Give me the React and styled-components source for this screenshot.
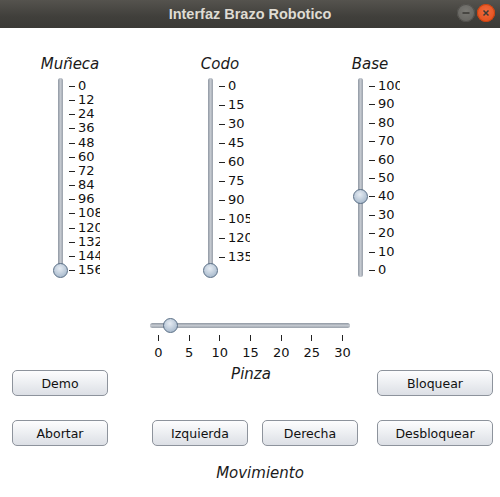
import styled, { createGlobalStyle } from 'styled-components';

const GlobalStyle = createGlobalStyle`
  html, body {
    margin: 0;
    padding: 0;
    background: #ffffff;
  }
  body {
    width: 500px;
    height: 497px;
    overflow: hidden;
    font-family: "DejaVu Sans", sans-serif;
  }
`;

const Window = styled.div`
  width: 500px;
  height: 497px;
  display: flex;
  flex-direction: column;
  background: #ffffff;
`;

const TitleBar = styled.div`
  height: 28px;
  flex: none;
  position: relative;
  display: flex;
  align-items: center;
  justify-content: center;
  background: linear-gradient(#55534e, #403f3b 60%, #3b3a36);
`;

const Title = styled.span`
  font-family: "Liberation Sans", Arial, sans-serif;
  font-weight: 700;
  font-size: 14.5px;
  color: #dfdbd2;
`;

const WindowButtons = styled.div`
  position: absolute;
  right: 5px;
  top: 4px;
  display: flex;
  gap: 2px;
`;

const WinButton = styled.div`
  width: 18px;
  height: 18px;
  border-radius: 50%;
  display: flex;
  align-items: center;
  justify-content: center;
  background: ${(p) => (p.$close ? 'radial-gradient(circle at 50% 40%, #f26a3c, #df4a16)' : 'radial-gradient(circle at 50% 40%, #7a7974, #5f5e5a)')};
  box-shadow: inset 0 0 0 1px ${(p) => (p.$close ? '#c8410f' : '#504f4b')};
`;

const Columns = styled.div`
  display: flex;
  gap: 90px;
  padding-left: 40px;
  margin-top: 27px;
`;

const Column = styled.div`
  width: 60px;
  display: flex;
  flex-direction: column;
`;

const Caption = styled.div`
  font-family: "DejaVu Sans", sans-serif;
  font-style: italic;
  font-size: 15px;
  line-height: 18px;
  color: #1a1a1a;
  text-align: center;
  white-space: nowrap;
  padding-left: ${(p) => p.$shift || 0}px;
`;

const VBox = styled.div`
  position: relative;
  width: 60px;
  height: 200px;
  margin-top: 5px;
  overflow: hidden;
`;

const VTrack = styled.div`
  width: 5px;
  height: 199px;
  margin-left: 18px;
  border-radius: 3px;
  background: linear-gradient(90deg, #8f97a2, #c3c8cf 50%, #9aa1ab);
`;

const Thumb = styled.div`
  position: absolute;
  width: 15px;
  height: 15px;
  box-sizing: border-box;
  border-radius: 50%;
  border: 1px solid #5a6f86;
  background: radial-gradient(circle at 45% 35%, #e6ecf3, #b7c6d6 60%, #98abc0);
`;

const VTick = styled.div`
  position: absolute;
  left: 29px;
  width: 6px;
  height: 1px;
  background: #222;
`;

const VTickLabel = styled.div`
  position: absolute;
  left: 38px;
  height: 14px;
  line-height: 14px;
  font-size: 13px;
  color: #111;
  white-space: nowrap;
`;

const HBox = styled.div`
  position: relative;
  width: 200px;
  height: 40px;
  margin: 41px auto 0;
`;

const HTrack = styled.div`
  height: 5px;
  margin-top: 4px;
  border-radius: 3px;
  background: linear-gradient(#8f97a2, #c3c8cf 50%, #9aa1ab);
`;

const HTick = styled.div`
  position: absolute;
  top: 16px;
  width: 1px;
  height: 6px;
  background: #222;
`;

const HTickLabel = styled.div`
  position: absolute;
  top: 27px;
  width: 30px;
  margin-left: -15px;
  text-align: center;
  font-size: 13px;
  line-height: 13px;
  color: #111;
`;

const ButtonRow = styled.div`
  display: grid;
  grid-template-columns: 96px 44px 96px 14px 96px 19px 116px;
  padding-left: 12px;
  margin-top: ${(p) => p.$top}px;
  align-items: start;
`;

const Button = styled.button`
  grid-column: ${(p) => p.$col};
  height: 26px;
  margin-top: ${(p) => p.$offset || 0}px;
  box-sizing: border-box;
  border: 1px solid #8d939c;
  border-radius: 5px;
  background: linear-gradient(#fdfdfe, #eef0f3 45%, #dcdfe5);
  font-family: "DejaVu Sans", sans-serif;
  font-size: 12.5px;
  color: #111;
  padding: 0;
`;

const MiddleCaption = styled(Caption)`
  grid-column: 2 / 7;
`;

const Footer = styled(Caption)`
  margin-top: 18px;
`;

const range = (from, to, step) => {
  const out = [];
  for (let v = from; step > 0 ? v <= to : v >= to; v += step) out.push(v);
  return out;
};

const VSlider = ({ label, ticks, top, bottom, value, shift }) => {
  const pos = (v) => 8 + ((v - top) / (bottom - top)) * 184;
  return (
    <Column>
      <Caption $shift={shift}>{label}</Caption>
      <VBox>
        <VTrack />
        {ticks.map((t) => (
          <VTick key={'t' + t} style={{ top: pos(t) }} />
        ))}
        {ticks.map((t) => (
          <VTickLabel key={'l' + t} style={{ top: pos(t) - 7 }}>
            {t}
          </VTickLabel>
        ))}
        <Thumb style={{ left: 13, top: pos(value) - 7 }} />
      </VBox>
    </Column>
  );
};

const HSlider = ({ ticks, min, max, value }) => {
  const pos = (v) => 8 + ((v - min) / (max - min)) * 184;
  return (
    <HBox>
      <HTrack />
      {ticks.map((t) => (
        <HTick key={'t' + t} style={{ left: pos(t) }} />
      ))}
      {ticks.map((t) => (
        <HTickLabel key={'l' + t} style={{ left: pos(t) + 0.5 }}>
          {t}
        </HTickLabel>
      ))}
      <Thumb style={{ top: -1, left: pos(value) - 7 }} />
    </HBox>
  );
};

export default function App() {
  return (
    <Window>
      <GlobalStyle />
      <TitleBar>
        <Title>Interfaz Brazo Robotico</Title>
        <WindowButtons>
          <WinButton>
            <svg width="10" height="10" viewBox="0 0 10 10">
              <line x1="1.5" y1="5" x2="8.5" y2="5" stroke="#3c3b37" strokeWidth="1.6" />
            </svg>
          </WinButton>
          <WinButton $close>
            <svg width="10" height="10" viewBox="0 0 10 10">
              <path d="M2.5 2.5 L7.5 7.5 M7.5 2.5 L2.5 7.5" stroke="#3c3b37" strokeWidth="1.5" />
            </svg>
          </WinButton>
        </WindowButtons>
      </TitleBar>

      <Columns>
        <VSlider label="Muñeca" ticks={range(0, 156, 12)} top={0} bottom={156} value={156} />
        <VSlider label="Codo" ticks={range(0, 135, 15)} top={0} bottom={145} value={145} />
        <VSlider label="Base" ticks={range(100, 0, -10)} top={100} bottom={0} value={40} />
      </Columns>

      <HSlider ticks={range(0, 30, 5)} min={0} max={30} value={2} />

      <ButtonRow $top={6}>
        <Button $col={1} $offset={5}>Demo</Button>
        <MiddleCaption $shift={17}>Pinza</MiddleCaption>
        <Button $col={7} $offset={5}>Bloquear</Button>
      </ButtonRow>

      <ButtonRow $top={24}>
        <Button $col={1}>Abortar</Button>
        <Button $col={3}>Izquierda</Button>
        <Button $col={5}>Derecha</Button>
        <Button $col={7}>Desbloquear</Button>
      </ButtonRow>

      <Footer $shift={20}>Movimiento</Footer>
    </Window>
  );
}
